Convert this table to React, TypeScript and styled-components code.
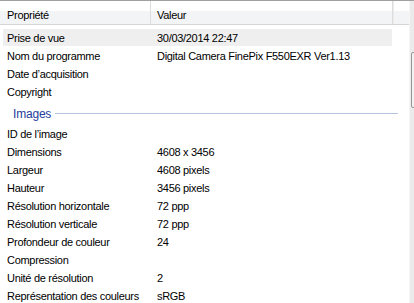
import React from "react";
import styled, { createGlobalStyle } from "styled-components";

const Global = createGlobalStyle`
  html, body { margin: 0; padding: 0; background: #ffffff; }
  body { font-family: "Liberation Sans", Arial, sans-serif; font-size: 11px; color: #000; }
`;

const Frame = styled.div`
  width: 414px;
  height: 303px;
  overflow: hidden;
  display: flex;
  flex-direction: column;
  border-top: 1px solid #a0a0a0;
  box-sizing: border-box;
`;

const Main = styled.div`
  flex: 1;
  display: flex;
  min-height: 0;
`;

const List = styled.div`
  width: 409px;
  flex: none;
  display: flex;
  flex-direction: column;
`;

const Header = styled.div`
  flex: none;
  height: 23px;
  display: flex;
  border-bottom: 1px solid #d5d5d5;
  background: linear-gradient(to bottom, #ffffff 0, #ffffff 10px, #f3f4f6 10px, #f3f4f6 100%);
`;

const HeaderCell = styled.div<{ $w?: number; $pad: number }>`
  ${(p) => (p.$w ? `width: ${p.$w}px; flex: none;` : "flex: 1;")}
  box-sizing: border-box;
  padding: 5px 0 0 ${(p) => p.$pad}px;
  display: flex;
  align-items: center;
  border-right: 1px solid #dcdcdc;
  letter-spacing: -0.3px;
`;

const HeaderFill = styled.div`
  flex: 1;
  border-left: 1px solid #ececec;
`;

const Body = styled.div`
  flex: none;
  padding-top: 4px;
  display: flex;
  flex-direction: column;
`;

const Row = styled.div<{ $selected?: boolean }>`
  flex: none;
  height: 17px;
  margin: 0 0 1px 3px;
  width: 389px;
  display: grid;
  grid-template-columns: 148px 1fr;
  align-items: center;
  background: ${(p) => (p.$selected ? "#efefef" : "transparent")};
  letter-spacing: -0.3px;
  white-space: nowrap;
`;

const Name = styled.span`
  padding-left: 4px;
`;

const Value = styled.span`
  padding-left: 6px;
`;

const Group = styled.div`
  flex: none;
  height: 24px;
  display: flex;
  align-items: center;
  padding: 1px 11px 0 13px;
  box-sizing: border-box;
  gap: 4px;
`;

const GroupTitle = styled.span`
  color: #1e3c9a;
  font-size: 12px;
  letter-spacing: -0.2px;
`;

const GroupLine = styled.div`
  flex: 1;
  height: 1px;
  background: #b4c2dc;
  margin-top: -1px;
`;

const Scrollbar = styled.div`
  width: 17px;
  flex: none;
  box-sizing: border-box;
  border-left: 1px solid #f6f6f6;
  background: #ebebeb;
  display: flex;
  flex-direction: column;
`;

const Thumb = styled.div`
  flex: none;
  margin: 51px 0 0 1px;
  height: 56px;
  box-sizing: border-box;
  border: 1px solid #979797;
  border-radius: 2px;
  background: linear-gradient(to right, #f4f4f4, #e3e3e3);
`;

type Item = { name: string; value?: string; selected?: boolean };

const general: Item[] = [
  { name: "Prise de vue", value: "30/03/2014 22:47", selected: true },
  { name: "Nom du programme", value: "Digital Camera FinePix F550EXR Ver1.13" },
  { name: "Date d\u2019acquisition" },
  { name: "Copyright" },
];

const images: Item[] = [
  { name: "ID de l\u2019image" },
  { name: "Dimensions", value: "4608 x 3456" },
  { name: "Largeur", value: "4608 pixels" },
  { name: "Hauteur", value: "3456 pixels" },
  { name: "R\u00e9solution horizontale", value: "72 ppp" },
  { name: "R\u00e9solution verticale", value: "72 ppp" },
  { name: "Profondeur de couleur", value: "24" },
  { name: "Compression" },
  { name: "Unit\u00e9 de r\u00e9solution", value: "2" },
  { name: "Repr\u00e9sentation des couleurs", value: "sRGB" },
];

const renderRow = (it: Item) => (
  <Row key={it.name} $selected={it.selected}>
    <Name>{it.name}</Name>
    <Value>{it.value ?? ""}</Value>
  </Row>
);

export default function App() {
  return (
    <>
      <Global />
      <Frame>
        <Main>
          <List>
            <Header>
              <HeaderCell $w={151} $pad={7}>Propriété</HeaderCell>
              <HeaderCell $w={242} $pad={6}>Valeur</HeaderCell>
              <HeaderFill />
            </Header>
            <Body>
              {general.map(renderRow)}
              <Group>
                <GroupTitle>Images</GroupTitle>
                <GroupLine />
              </Group>
              {images.map(renderRow)}
            </Body>
          </List>
          <Scrollbar>
            <Thumb />
          </Scrollbar>
        </Main>
      </Frame>
    </>
  );
}
